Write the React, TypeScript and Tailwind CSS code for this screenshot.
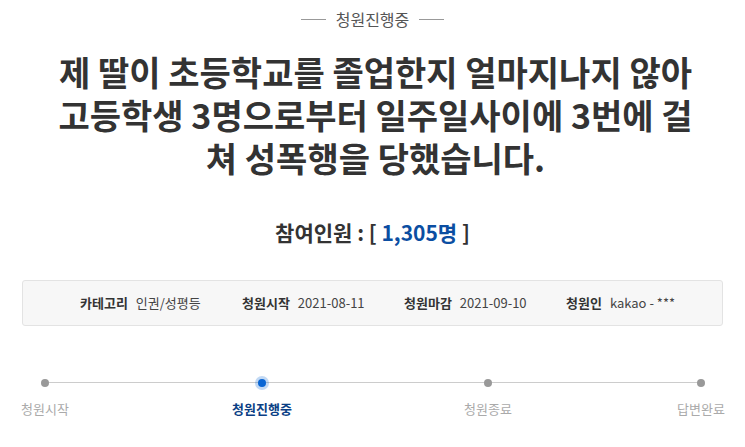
const font = { fontFamily: '"Noto Sans CJK KR", "Noto Sans", sans-serif' }

const infos = [
  { label: '카테고리', value: '인권/성평등' },
  { label: '청원시작', value: '2021-08-11' },
  { label: '청원마감', value: '2021-09-10' },
  { label: '청원인', value: 'kakao - ***' },
]

const steps = [
  { name: '청원시작', gap: '' },
  { name: '청원진행중', gap: 'ml-[171px]' },
  { name: '청원종료', gap: 'ml-[180px]' },
  { name: '답변완료', gap: 'ml-[167px]' },
]

export default function App() {
  return (
    <div className="w-[745px] h-[447px] bg-white overflow-hidden" style={font}>
      {/* status label */}
      <div className="flex items-center justify-center gap-[10px] pt-[6px] h-[32px]">
        <span className="w-[25px] h-px bg-[#999]" />
        <span className="text-[16px] leading-[24px] text-[#555]">청원진행중</span>
        <span className="w-[25px] h-px bg-[#999]" />
      </div>

      {/* title */}
      <h1 className="mt-[18px] pl-[6px] text-center text-[34px] leading-[43px] font-bold text-[#333]">
        제 딸이 초등학교를 졸업한지 얼마지나지 않아
        <br />
        고등학생 3명으로부터 일주일사이에 3번에 걸
        <br />
        쳐 성폭행을 당했습니다.
      </h1>

      {/* participants */}
      <div className="mt-[39px] text-center text-[21px] leading-[28px] font-bold text-[#333]">
        참여인원 : [ <span className="text-[#0b4ea2]">1,305명</span> ]
      </div>

      {/* info box */}
      <div className="mx-[22px] mt-[34px] h-[46px] rounded-[3px] border border-[#e3e3e3] bg-[#f7f7f7] flex items-center pl-[57px] text-[13px] text-[#333]">
        {infos.map((it, i) => (
          <div key={it.label} className={`flex items-center gap-[8px] ${i < 3 ? 'w-[162px]' : ''}`}>
            <span className="font-bold">{it.label}</span>
            <span className="text-[#444]">{it.value}</span>
          </div>
        ))}
      </div>

      {/* progress */}
      <div className="relative mx-[22px] mt-[53px] flex">
        <div className="absolute left-[23px] right-[23px] top-[3px] h-px bg-[#ccc]" />
        {steps.map((s, i) => (
          <div key={s.name} className={`relative flex flex-col items-center w-[46px] ${s.gap}`}>
            {i === 1 ? (
              <span className="w-[8px] h-[8px] rounded-full bg-[#0a66d4] shadow-[0_0_0_3px_rgba(10,102,212,0.25)]" />
            ) : (
              <span className="w-[8px] h-[8px] rounded-full bg-[#999]" />
            )}
            <span
              className={`mt-[12px] whitespace-nowrap text-[13px] leading-[20px] ${
                i === 1 ? 'font-bold text-[#0b3f85]' : 'text-[#aaa]'
              }`}
            >
              {s.name}
            </span>
          </div>
        ))}
      </div>
    </div>
  )
}
